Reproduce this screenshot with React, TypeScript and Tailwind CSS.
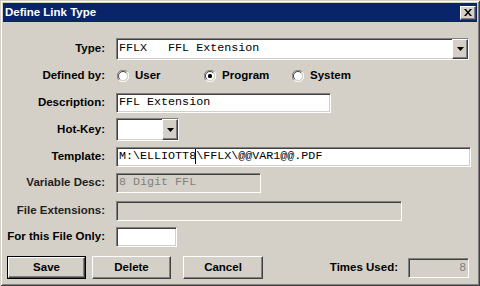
const sunken =
  'border border-t-[#808080] border-l-[#808080] border-b-white border-r-white shadow-[inset_1px_1px_0_#404040,inset_-1px_-1px_0_#d4d0c8]';
const raised =
  'border border-t-white border-l-white border-b-[#404040] border-r-[#404040] shadow-[inset_-1px_-1px_0_#808080] bg-[#d4d0c8]';
const sans = "font-['Liberation_Sans',Arial,sans-serif]";
const mono = "font-['Liberation_Mono','Courier_New',monospace]";

function Label({ text, className = '' }: { text: string; className?: string }) {
  return (
    <div className={`w-[102px] shrink-0 pr-0 text-right text-[11.5px] font-bold leading-none ${className}`}>
      {text}
    </div>
  );
}

function DropButton() {
  return (
    <div className={`${raised} flex h-full w-4 shrink-0 items-center justify-center`}>
      <svg width="7" height="4" viewBox="0 0 7 4">
        <path d="M0 0h7L3.5 4z" fill="#000" />
      </svg>
    </div>
  );
}

function Radio({ checked, label }: { checked?: boolean; label: string }) {
  return (
    <div className="flex items-center">
      <svg width="12" height="12" viewBox="0 0 12 12">
        <path d="M1.76 10.24A6 6 0 0 1 10.24 1.76" stroke="#808080" strokeWidth="1" fill="none" />
        <path d="M10.24 1.76A6 6 0 0 1 1.76 10.24" stroke="#ffffff" strokeWidth="1" fill="none" />
        <circle cx="6" cy="6" r="4.5" fill="#fff" />
        <path d="M2.8 9.2A4.5 4.5 0 0 1 9.2 2.8" stroke="#404040" strokeWidth="1" fill="none" />
        <path d="M9.2 2.8A4.5 4.5 0 0 1 2.8 9.2" stroke="#d4d0c8" strokeWidth="1" fill="none" />
        {checked && <rect x="4" y="4" width="4" height="4" rx="1.5" fill="#000" />}
      </svg>
      <span className="ml-[6px] text-[11.5px] font-bold leading-none">{label}</span>
    </div>
  );
}

export default function App() {
  return (
    <div
      className={`${sans} relative flex h-[286px] w-[480px] flex-col bg-[#d4d0c8] p-[3px] text-black shadow-[inset_1px_1px_0_#d4d0c8,inset_-1px_-1px_0_#404040,inset_2px_2px_0_#ffffff,inset_-2px_-2px_0_#808080]`}
    >
      {/* Title bar */}
      <div className="flex h-[19px] shrink-0 items-center justify-between bg-[#0a246a] pl-[2px] pr-[1px]">
        <span className="text-[11.5px] font-bold leading-none text-white">Define Link Type</span>
        <div className={`${raised} flex h-[14px] w-4 items-center justify-center`}>
          <svg width="8" height="7" viewBox="0 0 8 7">
            <path d="M0 0h2l2 2.5L6 0h2L5 3.5 8 7H6L4 4.5 2 7H0l3-3.5z" fill="#000" />
          </svg>
        </div>
      </div>

      {/* Type */}
      <div className="mt-[16px] flex h-[22px] items-center">
        <Label text="Type:" />
        <div className={`${sunken} ml-[11px] flex h-[22px] w-[353px] items-center bg-white`}>
          <span className={`${mono} flex-1 whitespace-pre pl-[2px] text-[11.7px] leading-none`}>
            FFLX   FFL Extension
          </span>
          <DropButton />
        </div>
      </div>

      {/* Defined by */}
      <div className="mt-[8px] flex h-4 items-center">
        <Label text="Defined by:" />
        <div className="ml-[12px] flex items-center">
          <div className="w-[87px]">
            <Radio label="User" />
          </div>
          <div className="w-[88px]">
            <Radio label="Program" checked />
          </div>
          <Radio label="System" />
        </div>
      </div>

      {/* Description */}
      <div className="mt-[9px] flex h-5 items-center">
        <Label text="Description:" />
        <div className={`${sunken} ml-[11px] flex h-5 w-[215px] items-center bg-white`}>
          <span className={`${mono} pl-[2px] text-[11.7px] leading-none`}>FFL Extension</span>
        </div>
      </div>

      {/* Hot-Key */}
      <div className="mt-[5px] flex h-[23px] items-center">
        <Label text="Hot-Key:" />
        <div className={`${sunken} ml-[11px] flex h-[23px] w-[63px] items-center bg-white`}>
          <div className="flex-1" />
          <DropButton />
        </div>
      </div>

      {/* Template */}
      <div className="mt-[6px] flex h-5 items-center">
        <Label text="Template:" />
        <div className={`${sunken} ml-[11px] flex h-5 w-[355px] items-center bg-white`}>
          <span className={`${mono} relative whitespace-pre pl-[2px] text-[11.7px] leading-none`}>
            M:\ELLIOTT8\FFLX\@@VAR1@@.PDF
            <span className="absolute left-[78px] top-[-2px] h-[15px] w-px bg-black" />
          </span>
        </div>
      </div>

      {/* Variable Desc */}
      <div className="mt-[6px] flex h-5 items-center">
        <Label text="Variable Desc:" className="text-[#222]" />
        <div className={`${sunken} ml-[11px] flex h-5 w-[145px] items-center bg-[#d4d0c8]`}>
          <span className={`${mono} pl-[2px] text-[11.7px] leading-none text-[#808080]`}>8 Digit FFL</span>
        </div>
      </div>

      {/* File Extensions */}
      <div className="mt-[8px] flex h-5 items-center">
        <Label text="File Extensions:" className="text-[#222]" />
        <div className={`${sunken} ml-[11px] h-5 w-[286px] bg-[#d4d0c8]`} />
      </div>

      {/* For this File Only */}
      <div className="mt-[6px] flex h-5 items-center">
        <Label text="For this File Only:" />
        <div className={`${sunken} ml-[11px] h-5 w-[61px] bg-white`} />
      </div>

      {/* Buttons */}
      <div className="mt-[9px] flex h-[23px] items-center pl-[4px] pr-[8px]">
        <div className="h-[23px] w-[79px] border border-black">
          <div className={`${raised} flex h-full w-full items-center justify-center text-[11.5px] font-bold`}>
            Save
          </div>
        </div>
        <div className={`${raised} ml-[6px] flex h-[23px] w-[79px] items-center justify-center text-[11.5px] font-bold`}>
          Delete
        </div>
        <div className={`${raised} ml-[12px] flex h-[23px] w-[80px] items-center justify-center text-[11.5px] font-bold`}>
          Cancel
        </div>
        <div className="flex-1" />
        <span className="text-[11.5px] font-bold leading-none">Times Used:</span>
        <div className={`${sunken} ml-[10px] flex h-5 w-[61px] items-center justify-end bg-[#d4d0c8] pr-[2px]`}>
          <span className="text-[11.5px] leading-none text-[#808080]">8</span>
        </div>
      </div>
    </div>
  );
}
